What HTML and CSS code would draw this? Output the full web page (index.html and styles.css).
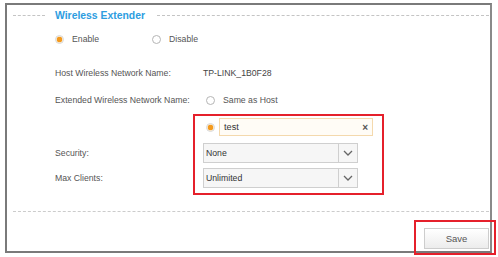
FILE: index.html
```html
<!DOCTYPE html>
<html>
<head>
<meta charset="utf-8">
<link rel="stylesheet" href="styles.css">
</head>
<body>
<div class="frame">
  <div class="legend">
    <span class="dash dash-left"></span>
    <span class="legend-title">Wireless Extender</span>
    <span class="dash dash-right"></span>
  </div>
  <div class="row row-enable">
    <label class="opt"><span class="radio checked"></span>Enable</label>
    <label class="opt opt-disable"><span class="radio"></span>Disable</label>
  </div>
  <div class="row row-host">
    <span class="label">Host Wireless Network Name:</span>
    <span class="value">TP-LINK_1B0F28</span>
  </div>
  <div class="row row-ext">
    <span class="label">Extended Wireless Network Name:</span>
    <label class="opt opt-same"><span class="radio"></span>Same as Host</label>
  </div>
  <div class="row row-test">
    <span class="label"></span>
    <span class="radio checked radio-test"></span>
    <div class="textbox"><span class="tb-text">test</span><span class="clear">×</span></div>
  </div>
  <div class="row row-sec">
    <span class="label">Security:</span>
    <div class="select"><span class="sel-text">None</span><span class="sel-btn"><svg width="10" height="6" viewBox="0 0 10 6"><path d="M1 1 L5 5 L9 1" fill="none" stroke="#666" stroke-width="1.3"/></svg></span></div>
  </div>
  <div class="row row-max">
    <span class="label">Max Clients:</span>
    <div class="select"><span class="sel-text">Unlimited</span><span class="sel-btn"><svg width="10" height="6" viewBox="0 0 10 6"><path d="M1 1 L5 5 L9 1" fill="none" stroke="#666" stroke-width="1.3"/></svg></span></div>
  </div>
  <div class="divider"></div>
  <div class="actions">
    <button class="save">Save</button>
  </div>
</div>
<div class="mark mark-form"></div>
<div class="mark mark-save"></div>
</body>
</html>
```
FILE: styles.css
```css
html, body {
  margin: 0;
  padding: 0;
  background: #ffffff;
}
body {
  width: 498px;
  height: 257px;
  overflow: hidden;
  position: relative;
  font-family: "Liberation Sans", Arial, sans-serif;
  font-size: 8.7px;
  color: #555;
}
.frame {
  box-sizing: border-box;
  margin: 3px 0 0 5px;
  width: 487px;
  height: 250px;
  border: 2px solid #7a7a7a;
  border-right: 2px solid #8a8a8a;
  display: flex;
  flex-direction: column;
}
.legend {
  height: 20px;
  display: flex;
  align-items: center;
  padding-left: 6px;
}
.dash {
  display: block;
  border-top: 1px dashed #c4c4c4;
  height: 0;
}
.dash-left { width: 32px; }
.dash-right { flex: 1; margin-right: 1px; }
.legend-title {
  color: #2d9ddf;
  font-weight: bold;
  font-size: 10.4px;
  padding: 0 12px 0 10px;
}
.row {
  display: flex;
  align-items: center;
  padding-left: 48px;
  height: 20px;
}
.row-enable { margin-top: 4px; }
.row-host { margin-top: 14px; }
.row-ext { margin-top: 7px; }
.row-test { margin-top: 8px; height: 18px; }
.row-sec { margin-top: 7px; }
.row-max { margin-top: 5px; }
.label {
  width: 148px;
  flex: none;
}
.value { color: #444; }
.opt {
  display: flex;
  align-items: center;
}
.opt-disable { margin-left: 53px; }
.opt-same { margin-left: 3px; }
.radio {
  box-sizing: border-box;
  width: 9px;
  height: 9px;
  border: 1px solid #b5b5b5;
  border-radius: 50%;
  margin-right: 8px;
  background: #fff;
  display: inline-block;
  flex: none;
}
.radio.checked {
  border-color: #d8d8d8;
  background: radial-gradient(circle, #f39a1f 0 2.6px, #fce3bd 3px, #fff 4px);
}
.radio-test {
  margin-left: 3px;
  margin-right: 4px;
}
.textbox {
  box-sizing: border-box;
  width: 154px;
  height: 18px;
  border: 1px solid #f4d9ad;
  background: #fffcf6;
  display: flex;
  align-items: center;
  justify-content: space-between;
  padding: 0 4px 0 4px;
  color: #333;
  font-size: 9.2px;
}
.clear {
  color: #555;
  font-weight: bold;
  font-size: 10px;
}
.select {
  box-sizing: border-box;
  width: 155px;
  height: 20px;
  border: 1px solid #cfcfcf;
  background: #f6f6f6;
  display: flex;
  align-items: stretch;
  color: #333;
}
.sel-text {
  flex: 1;
  display: flex;
  align-items: center;
  padding-left: 2px;
}
.sel-btn {
  width: 18px;
  border-left: 1px solid #cfcfcf;
  display: flex;
  align-items: center;
  justify-content: center;
}
.divider {
  margin: 23px 1px 0 6px;
  border-top: 1px dashed #cccccc;
  height: 0;
}
.actions {
  display: flex;
  justify-content: flex-end;
  padding-right: 1px;
  margin-top: 16px;
}
.save {
  box-sizing: border-box;
  width: 65px;
  height: 21px;
  border: 1px solid #cdcdcd;
  background: linear-gradient(#ffffff, #ececec);
  font-family: "Liberation Sans", Arial, sans-serif;
  font-size: 9.5px;
  color: #555;
  padding: 0;
}
.mark {
  position: absolute;
  box-sizing: border-box;
  border: 2px solid #e5202b;
}
.mark-form {
  left: 193px;
  top: 114px;
  width: 191px;
  height: 81px;
}
.mark-save {
  left: 414px;
  top: 220px;
  width: 82px;
  height: 35px;
}
```
